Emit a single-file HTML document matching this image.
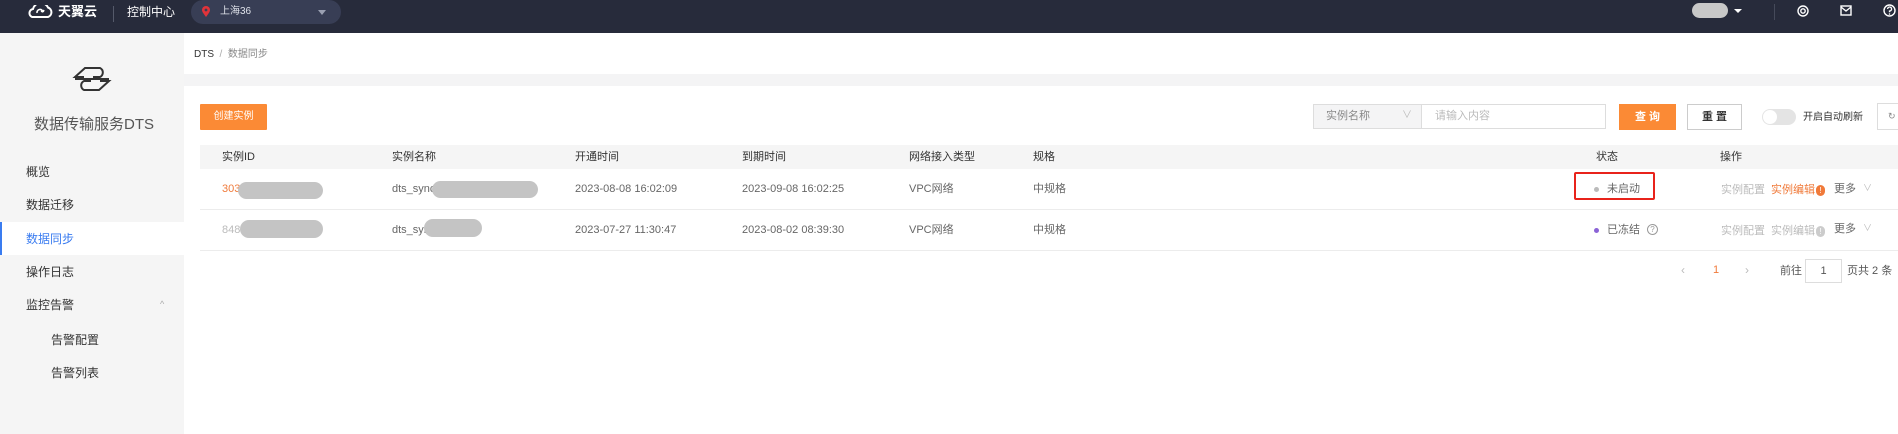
<!DOCTYPE html>
<html><head><meta charset="utf-8"><style>
*{margin:0;padding:0;box-sizing:border-box}
body{width:1898px;height:434px;overflow:hidden;background:#fff;font-family:"Liberation Sans","Noto Sans CJK SC",sans-serif;font-size:11px;line-height:13px;color:#333;position:relative}
.a{position:absolute;white-space:nowrap}
.hdr{left:0;top:0;width:1898px;height:33px;background:#272b3b}
.side{left:0;top:33px;width:184px;height:401px;background:#f5f5f5}
.th{color:#333;font-size:11px}
.td{color:#666;font-size:11px}
.blob{background:#c4c4c4;border-radius:12px;height:15px}
.m{font-size:12px;line-height:14px}
</style></head><body>
<div class="a hdr"></div>
<svg class="a" style="left:25px;top:5px" width="30" height="13" viewBox="0 0 30 13"><path d="M7 12 H23 A5 5 0 0 0 23 2.5 A8 8 0 0 0 8 4 A4.2 4.2 0 0 0 7 12Z" fill="none" stroke="#fff" stroke-width="2"/><path d="M12 8 A3 3 0 0 1 18 7 M18 7 l-2 -1 M18 7 l1 -2" stroke="#fff" stroke-width="1.6" fill="none"/></svg>
<div class="a" style="left:58px;top:4px;color:#fff;font-size:13px;line-height:16px;font-weight:bold">天翼云</div>
<div class="a" style="left:113px;top:6px;width:1px;height:16px;background:#555a6a"></div>
<div class="a" style="left:127px;top:4px;color:#fff;font-size:12px;line-height:16px">控制中心</div>
<div class="a" style="left:191px;top:0;width:150px;height:24px;background:#383e55;border-radius:12px"></div>
<svg class="a" style="left:202px;top:6px" width="8" height="11" viewBox="0 0 8 11"><path d="M4 11 C1 7 0 5.5 0 4 A4 4 0 0 1 8 4 C8 5.5 7 7 4 11Z" fill="#e0333a"/><circle cx="4" cy="4" r="1.4" fill="#383e55"/></svg>
<div class="a" style="left:220px;top:5px;color:#dfe2ea;font-size:10px">上海36</div>
<div class="a" style="left:318px;top:10px;border:4px solid transparent;border-top:5px solid #9aa0b2"></div>
<div class="a blob" style="left:1692px;top:3px;width:36px;background:#c8c8c8"></div>
<div class="a" style="left:1734px;top:9px;border:4px solid transparent;border-top:4px solid #fff"></div>
<div class="a" style="left:1774px;top:4px;width:1px;height:16px;background:#454a5a"></div>
<svg class="a" style="left:1797px;top:5px" width="12" height="12" viewBox="0 0 12 12"><circle cx="6" cy="6" r="5" fill="none" stroke="#fff" stroke-width="1.4"/><circle cx="6" cy="6" r="2.2" fill="none" stroke="#fff" stroke-width="1.4"/></svg>
<svg class="a" style="left:1840px;top:5px" width="12" height="11" viewBox="0 0 12 11"><rect x="1" y="1" width="10" height="9" fill="none" stroke="#fff" stroke-width="1.4"/><path d="M1 2 L6 6 L11 2" fill="none" stroke="#fff" stroke-width="1.3"/></svg>
<svg class="a" style="left:1883px;top:4px" width="13" height="13" viewBox="0 0 13 13"><circle cx="6.5" cy="6.5" r="5.5" fill="none" stroke="#fff" stroke-width="1.4"/><path d="M4.6 5 A2 2 0 1 1 6.5 7 V8.3" fill="none" stroke="#fff" stroke-width="1.3"/><circle cx="6.5" cy="10" r=".8" fill="#fff"/></svg>

<div class="a side"></div>
<svg class="a" style="left:72px;top:65px" width="40" height="28" viewBox="0 0 40 28"><g fill="none" stroke="#333" stroke-width="2"><path d="M12 12 L3 12 L13 3 L28 3 A5 5 0 0 1 28 12 L21 12"/><path d="M28 16 L37 16 L27 25 L12 25 A5 5 0 0 1 12 16 L19 16"/><path d="M3 14 H37"/></g></svg>
<div class="a" style="left:34px;top:116px;font-size:15px;line-height:18px;color:#555">数据传输服务DTS</div>
<div class="a m" style="left:26px;top:165px">概览</div>
<div class="a m" style="left:26px;top:198px">数据迁移</div>
<div class="a" style="left:0;top:222px;width:184px;height:33px;background:#fff"></div>
<div class="a" style="left:0;top:222px;width:2px;height:33px;background:#3a7cf0"></div>
<div class="a m" style="left:26px;top:232px;color:#3a7cf0">数据同步</div>
<div class="a m" style="left:26px;top:265px">操作日志</div>
<div class="a m" style="left:26px;top:298px">监控告警</div>
<div class="a" style="left:160px;top:298px;font-size:9px;color:#aaa">^</div>
<div class="a m" style="left:51px;top:333px">告警配置</div>
<div class="a m" style="left:51px;top:366px">告警列表</div>

<div class="a" style="left:194px;top:48px;font-size:10px;color:#333">DTS <span style="color:#aaa">&nbsp;/&nbsp;</span> <span style="color:#888">数据同步</span></div>
<div class="a" style="left:184px;top:74px;width:1714px;height:12px;background:#f4f4f5"></div>
<div class="a" style="left:200px;top:104px;width:67px;height:26px;background:#fb8a35;color:#fff;font-size:10px;line-height:26px;text-align:center;border-radius:1px">创建实例</div>

<div class="a" style="left:1313px;top:104px;width:109px;height:25px;background:#f4f4f5;border:1px solid #ddd"></div>
<div class="a" style="left:1326px;top:110px;color:#888;font-size:11px">实例名称</div>
<div class="a" style="left:1402px;top:109px;color:#bbb;font-size:10px">∨</div>
<div class="a" style="left:1422px;top:104px;width:184px;height:25px;border:1px solid #ddd;border-left:none"></div>
<div class="a" style="left:1435px;top:110px;color:#bbb;font-size:11px">请输入内容</div>
<div class="a" style="left:1619px;top:104px;width:57px;height:26px;background:#fb8a35;color:#fff;font-size:11px;line-height:26px;text-align:center;font-weight:bold">查 询</div>
<div class="a" style="left:1687px;top:104px;width:55px;height:26px;border:1px solid #ccc;font-size:11px;line-height:24px;text-align:center;font-weight:bold">重 置</div>
<div class="a" style="left:1762px;top:109px;width:34px;height:16px;border-radius:8px;background:#e4e4e4"></div>
<div class="a" style="left:1763px;top:110px;width:14px;height:14px;border-radius:7px;background:#fff"></div>
<div class="a" style="left:1803px;top:111px;font-size:10px">开启自动刷新</div>
<div class="a" style="left:1877px;top:103px;width:30px;height:27px;border:1px solid #ddd"></div>
<div class="a" style="left:1888px;top:110px;font-size:9px;color:#888">↻</div>

<div class="a" style="left:200px;top:145px;width:1698px;height:24px;background:#f5f5f5"></div>
<div class="a th" style="left:222px;top:151px">实例ID</div>
<div class="a th" style="left:392px;top:151px">实例名称</div>
<div class="a th" style="left:575px;top:151px">开通时间</div>
<div class="a th" style="left:742px;top:151px">到期时间</div>
<div class="a th" style="left:909px;top:151px">网络接入类型</div>
<div class="a th" style="left:1033px;top:151px">规格</div>
<div class="a th" style="left:1596px;top:151px">状态</div>
<div class="a th" style="left:1720px;top:151px">操作</div>

<div class="a" style="left:200px;top:209px;width:1698px;height:1px;background:#ececec"></div>
<div class="a" style="left:200px;top:250px;width:1698px;height:1px;background:#ececec"></div>

<div class="a td" style="left:222px;top:183px;color:#f07a3a">303</div>
<div class="a blob" style="left:238px;top:182px;width:85px;height:17px"></div>
<div class="a td" style="left:392px;top:183px">dts_sync</div>
<div class="a blob" style="left:432px;top:181px;width:106px;height:17px"></div>
<div class="a td" style="left:575px;top:183px">2023-08-08 16:02:09</div>
<div class="a td" style="left:742px;top:183px">2023-09-08 16:02:25</div>
<div class="a td" style="left:909px;top:183px">VPC网络</div>
<div class="a td" style="left:1033px;top:183px">中规格</div>
<div class="a" style="left:1574px;top:172px;width:81px;height:28px;border:2px solid #e8231b;border-radius:2px"></div>
<div class="a" style="left:1594px;top:187px;width:5px;height:5px;border-radius:3px;background:#bbb"></div>
<div class="a td" style="left:1607px;top:183px">未启动</div>
<div class="a td" style="left:1721px;top:184px;color:#bbb">实例配置</div>
<div class="a td" style="left:1771px;top:184px;color:#f07a3a">实例编辑</div>
<div class="a" style="left:1816px;top:185px;width:9px;height:11px;border-radius:5px;background:#f07a3a;color:#fff;font-size:8px;text-align:center;line-height:11px">!</div>
<div class="a td" style="left:1834px;top:183px">更多</div>
<div class="a" style="left:1863px;top:182px;color:#bbb;font-size:9px">∨</div>

<div class="a td" style="left:222px;top:224px;color:#bbb">848</div>
<div class="a blob" style="left:240px;top:220px;width:83px;height:18px"></div>
<div class="a td" style="left:392px;top:224px">dts_syn</div>
<div class="a blob" style="left:424px;top:219px;width:58px;height:18px"></div>
<div class="a td" style="left:575px;top:224px">2023-07-27 11:30:47</div>
<div class="a td" style="left:742px;top:224px">2023-08-02 08:39:30</div>
<div class="a td" style="left:909px;top:224px">VPC网络</div>
<div class="a td" style="left:1033px;top:224px">中规格</div>
<div class="a" style="left:1594px;top:228px;width:5px;height:5px;border-radius:3px;background:#8b63d6"></div>
<div class="a td" style="left:1607px;top:224px">已冻结</div>
<div class="a" style="left:1647px;top:224px;width:11px;height:11px;border:1px solid #999;border-radius:6px;font-size:8px;line-height:9px;text-align:center;color:#999">?</div>
<div class="a td" style="left:1721px;top:225px;color:#bbb">实例配置</div>
<div class="a td" style="left:1771px;top:225px;color:#bbb">实例编辑</div>
<div class="a" style="left:1816px;top:226px;width:9px;height:11px;border-radius:5px;background:#ccc;color:#fff;font-size:8px;text-align:center;line-height:11px">!</div>
<div class="a td" style="left:1834px;top:223px">更多</div>
<div class="a" style="left:1863px;top:222px;color:#bbb;font-size:9px">∨</div>

<div class="a" style="left:1681px;top:264px;color:#bbb;font-size:12px">‹</div>
<div class="a" style="left:1713px;top:264px;color:#f07a3a;font-size:11px">1</div>
<div class="a" style="left:1745px;top:264px;color:#bbb;font-size:12px">›</div>
<div class="a td" style="left:1780px;top:265px;color:#555">前往</div>
<div class="a" style="left:1805px;top:259px;width:37px;height:24px;border:1px solid #ddd;text-align:center;line-height:22px;font-size:11px;color:#555">1</div>
<div class="a td" style="left:1847px;top:265px;color:#555">页共 2 条</div>
</body></html>
